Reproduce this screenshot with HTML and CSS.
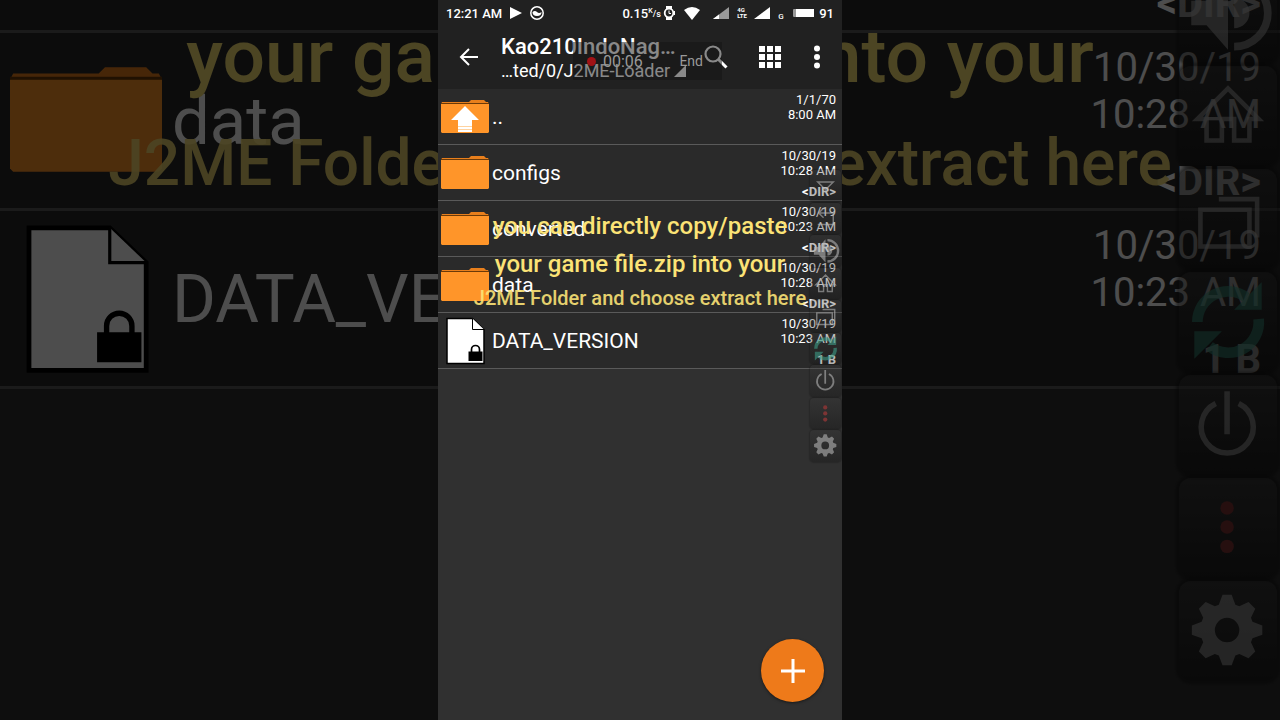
FILE: index.html
```
<!doctype html>
<html lang="en">
    <head>
        <meta charset="utf-8">
        <title>J2ME-Loader files</title>
        <link rel="stylesheet" href="styles.css">
    </head>
    <body>
        <!-- shared icons -->
        <svg class="defs" aria-hidden="true">
            <symbol id="folder" viewBox="0 0 48 48">
                <path fill="#e87f1c" d="M0 11l1-2h27l2-2h13l2 2h2l1 2v3H0z"/>
                <path fill="#ff9529" d="M0 11h48v28l-1 1H1l-1-1z"/>
                <path stroke="#6b3a08" stroke-width="1" d="M0 10.5h48"/>
            </symbol>
            <symbol id="folder-up" viewBox="0 0 48 48">
                <use href="#folder"/>
                <path fill="#fff" d="M24 13l14 14h-7v12H17V27h-7z"/>
                <path stroke="#ffd3a0" d="M17 33.500h14M17 36.500h14"/>
            </symbol>
            <symbol id="locked-file" viewBox="0 0 48 48">
                <path fill="#fff" stroke="#000" stroke-width="1.500" d="M6 1.500h25.500l11.500 11V46.500H6z"/>
                <path fill="#fff" stroke="#000" d="M31.500 1.500v11H43"/>
                <path d="M27.500 34.500h14v9.500h-14z"/>
                <path fill="none" stroke="#000" stroke-width="1.700" d="M30.500 35v-2.500a4 4 0 0 1 8 0V35"/>
            </symbol>
            <symbol id="down" viewBox="0 0 32 32">
                <path fill="none" stroke="currentColor" stroke-width="1.500" d="M8 12h16l-8 8z"/>
            </symbol>
            <symbol id="return" viewBox="0 0 32 32">
                <path fill="none" stroke="currentColor" stroke-width="1.500" d="M14 5l-5 5 5 5M9 10h15v12H8"/>
            </symbol>
            <symbol id="volume" viewBox="0 0 32 32">
                <path fill="currentColor" d="M4 12h5l7-8v24l-7-8H4zM18 11a5 5 0 0 1 0 10z"/>
                <path fill="none" stroke="currentColor" stroke-width="2.500" d="M18 5a11 11 0 0 1 0 22"/>
            </symbol>
            <symbol id="home" viewBox="0 0 32 32">
                <path fill="none" stroke="currentColor" stroke-width="1.500" d="M6 17L16 7l10 10h-3v7h-5v-7h-4v7H9v-7z"/>
            </symbol>
            <symbol id="recents" viewBox="0 0 32 32">
                <path fill="none" stroke="currentColor" stroke-width="1.500" d="M7 13h16v12H7zM13 9.500h12.500V22"/>
            </symbol>
            <symbol id="refresh" viewBox="0 0 32 32">
                <g opacity="0.6">
                    <path fill="none" stroke="#3c9c86" stroke-width="3.500" d="M6 16a10 10 0 0 1 16-8M26 15a10 10 0 0 1-16 9"/>
                    <path fill="#3c9c86" d="M27 3v9H18zM5 28v-9h9z"/>
                </g>
            </symbol>
            <symbol id="power" viewBox="0 0 32 32">
                <path fill="none" stroke="currentColor" stroke-width="1.800" d="M12 9a8.500 8.500 0 1 0 7.500 0M15.700 5v14"/>
            </symbol>
            <symbol id="more-red" viewBox="0 0 32 32">
                <g fill="#7d3434"><circle cx="15.700" cy="9.500" r="2.200"/><circle cx="15.700" cy="15.700" r="2.200"/><circle cx="15.700" cy="22" r="2.200"/></g>
            </symbol>
            <symbol id="gear" viewBox="0 0 32 32">
                <g fill="currentColor" transform="translate(15.700 15.700)">
                    <path fill-rule="evenodd" d="M-2.700-8.300L-1.500-11.500H1.500L2.700-8.300L4-7.800L7-9.200L9.200-7L7.800-4L8.300-2.700L11.500-1.500V1.500L8.300 2.700L7.800 4L9.200 7L7 9.200L4 7.800L2.700 8.300L1.500 11.500H-1.500L-2.700 8.300L-4 7.800L-7 9.200L-9.200 7L-7.800 4L-8.300 2.700L-11.500 1.500V-1.500L-8.300-2.700L-7.800-4L-9.200-7L-7-9.200L-4-7.800zM0-4a4 4 0 1 0 0 8a4 4 0 1 0 0-8z"/>
                </g>
            </symbol>
        </svg>

        <!-- enlarged, dimmed copy behind the phone -->
        <div class="backdrop" aria-hidden="true">
            <div class="files">
                <div class="file"><svg class="file-icon"><use href="#folder"/></svg><span class="name">converted</span><span class="meta">10/30/19<br>10:23 AM<b>&lt;DIR&gt;</b></span></div>
                <div class="file"><svg class="file-icon"><use href="#folder"/></svg><span class="name">data</span><span class="meta">10/30/19<br>10:28 AM<b>&lt;DIR&gt;</b></span></div>
                <div class="file"><svg class="file-icon"><use href="#locked-file"/></svg><span class="name">DATA_VERSION</span><span class="meta">10/30/19<br>10:23 AM<b>1 B</b></span></div>
            </div>
            <div class="caption">
                <p>your game file.zip into your</p>
                <p class="small">J2ME Folder and choose extract here</p>
            </div>
            <div class="tools">
                <span class="tool"><svg><use href="#volume"/></svg></span>
                <span class="tool"><svg><use href="#home"/></svg></span>
                <span class="tool"><svg><use href="#recents"/></svg></span>
                <span class="tool"><svg><use href="#refresh"/></svg></span>
                <span class="tool"><svg><use href="#power"/></svg></span>
                <span class="tool"><svg><use href="#more-red"/></svg></span>
                <span class="tool"><svg><use href="#gear"/></svg></span>
            </div>
        </div>

        <main class="phone">
            <div class="status">
                <span>12:21 AM</span>
                <svg width="12" height="14" viewBox="0 0 12 14"><path fill="#fff" d="M0 1l12 6-12 6z"/></svg>
                <svg width="14" height="14" viewBox="0 0 14 14"><circle cx="7" cy="7" r="6.200" fill="none" stroke="#fff" stroke-width="1.500"/><path fill="#fff" d="M2.500 6q2.500-2 4.500 0t4.500 0q0 4-4.500 4T2.500 6z"/></svg>
                <div class="status-right">
                    <span>0.15</span>
                    <span class="unit"><sup>K</sup>/s</span>
                    <svg width="16" height="14" viewBox="0 0 16 14"><path fill="#fff" d="M3 0h6v3H3zM3 11h6v3H3z"/><circle cx="6" cy="7" r="4.300" fill="#212121" stroke="#fff" stroke-width="1.800"/><path fill="none" stroke="#fff" d="M6 4.500V7.500h2M11.500 5v4"/></svg>
                    <svg width="26" height="14" viewBox="0 0 26 14"><path fill="#fff" d="M1 4q8-6 16 0L9 14z"/></svg>
                    <svg width="20" height="14" viewBox="0 0 20 14"><path fill="#999" d="M0 13L16 1v12z"/><path fill="#fff" d="M0 13l6-4.500V13z"/></svg>
                    <span class="net">4G<br>LTE</span>
                    <svg width="20" height="14" viewBox="0 0 20 14"><path fill="#fff" d="M0 13L16 1v12z"/></svg>
                    <span class="g">G</span>
                    <svg width="23" height="14" viewBox="0 0 23 14"><rect x="1" y="3" width="21" height="8" rx="1" fill="#999"/><path fill="#fff" d="M4 3h18v8H4z"/></svg>
                    <span>91</span>
                </div>
            </div>

            <header class="toolbar">
                <button class="icon-btn" aria-label="Back"><svg width="20" height="20" viewBox="0 0 20 20"><path fill="none" stroke="#fff" stroke-width="2" d="M19 10H2M10 2l-8 8 8 8"/></svg></button>
                <div class="title">
                    <h1>Kao210IndoNag…</h1>
                    <p>…ted/0/J2ME-Loader<svg width="12" height="12" viewBox="0 0 12 12"><path fill="#fff" d="M12 0v12H0z"/></svg></p>
                </div>
                <button class="icon-btn" aria-label="Search"><svg width="24" height="24" viewBox="0 0 24 24"><circle cx="9" cy="9" r="7.500" fill="none" stroke="#fff" stroke-width="2.200"/><path stroke="#fff" stroke-width="3" d="M14.500 14.500l8 8"/></svg></button>
                <button class="icon-btn grid-btn" aria-label="Grid view"><svg width="24" height="24" viewBox="0 0 24 24"><path fill="#fff" d="M1 1h6v6H1zM9 1h6v6H9zM17 1h6v6h-6zM1 9h6v6H1zM9 9h6v6H9zM17 9h6v6h-6zM1 17h6v6H1zM9 17h6v6H9zM17 17h6v6h-6z"/></svg></button>
                <button class="icon-btn" aria-label="More"><svg width="6" height="24" viewBox="0 0 6 24"><g fill="#fff"><circle cx="3" cy="3.500" r="3"/><circle cx="3" cy="12" r="3"/><circle cx="3" cy="20.500" r="3"/></g></svg></button>
                <div class="recorder"><i></i><span>00:06</span><button>End</button></div>
            </header>

            <div class="files">
                <div class="file"><svg class="file-icon"><use href="#folder-up"/></svg><span class="name">..</span><span class="meta">1/1/70<br>8:00 AM</span></div>
                <div class="file"><svg class="file-icon"><use href="#folder"/></svg><span class="name">configs</span><span class="meta">10/30/19<br>10:28 AM<b>&lt;DIR&gt;</b></span></div>
                <div class="file"><svg class="file-icon"><use href="#folder"/></svg><span class="name">converted</span><span class="meta">10/30/19<br>10:23 AM<b>&lt;DIR&gt;</b></span></div>
                <div class="file"><svg class="file-icon"><use href="#folder"/></svg><span class="name">data</span><span class="meta">10/30/19<br>10:28 AM<b>&lt;DIR&gt;</b></span></div>
                <div class="file"><svg class="file-icon"><use href="#locked-file"/></svg><span class="name">DATA_VERSION</span><span class="meta">10/30/19<br>10:23 AM<b>1 B</b></span></div>
            </div>

            <div class="caption">
                <p>you can directly copy/paste</p>
                <p>your game file.zip into your</p>
                <p class="small">J2ME Folder and choose extract here</p>
            </div>

            <div class="tools">
                <button class="tool" aria-label="Notifications"><svg><use href="#down"/></svg></button>
                <button class="tool" aria-label="Return"><svg><use href="#return"/></svg></button>
                <button class="tool" aria-label="Volume"><svg><use href="#volume"/></svg></button>
                <button class="tool" aria-label="Home"><svg><use href="#home"/></svg></button>
                <button class="tool" aria-label="Recent apps"><svg><use href="#recents"/></svg></button>
                <button class="tool" aria-label="Refresh"><svg><use href="#refresh"/></svg></button>
                <button class="tool" aria-label="Power"><svg><use href="#power"/></svg></button>
                <button class="tool" aria-label="More tools"><svg><use href="#more-red"/></svg></button>
                <button class="tool" aria-label="Settings"><svg><use href="#gear"/></svg></button>
            </div>

            <button class="add" aria-label="Add"><svg width="24" height="24" viewBox="0 0 24 24"><path stroke="#fff" stroke-width="3" d="M12 0v24M0 12h24"/></svg></button>
        </main>
    </body>
</html>
```
FILE: styles.css
```
* {
    box-sizing: border-box;
}
body {
    margin: 0;
    min-height: 100vh;
    position: relative;
    overflow: hidden;
    background: #000;
    color: #fff;
    font-family: Roboto, sans-serif;
}
h1, p {
    margin: 0;
}
button {
    padding: 0;
    border: 0;
    background: none;
    color: inherit;
    font: inherit;
}
svg {
    display: block;
    flex: none;
}
.defs {
    position: absolute;
    width: 0;
    height: 0;
}

/* phone */
.phone {
    position: relative;
    width: 100%;
    max-width: 404px;
    min-height: 100vh;
    margin: 0 auto;
    background: #303030;
}
.status {
    display: flex;
    align-items: center;
    gap: 8px;
    height: 26px;
    padding: 0 8px;
    background: #212121;
    font-size: 13px;
    font-weight: 500;
}
.status-right {
    display: flex;
    align-items: center;
    gap: 4px;
    margin-left: auto;
}
.unit {
    width: 11px;
    margin-left: -4px;
    font-size: 9px;
    white-space: nowrap;
}
.unit sup {
    font-size: 7px;
}
.net {
    width: 13px;
    font-size: 6px;
    line-height: 6px;
    font-weight: 700;
}
.g {
    width: 10px;
    padding-top: 6px;
    font-size: 8px;
}
.toolbar {
    position: relative;
    display: flex;
    align-items: center;
    height: 63px;
    padding: 0 10px 2px;
    background: #212121;
}
.icon-btn {
    display: flex;
    justify-content: center;
    flex: none;
    width: 30px;
}
.icon-btn:first-child {
    width: 42px;
}
.grid-btn {
    margin: 0 17px 0 24px;
}
.title {
    flex: 1;
    padding: 4px 0 0 11px;
    white-space: nowrap;
}
.title h1 {
    font-size: 22px;
    line-height: 24px;
    font-weight: 500;
}
.title p {
    display: flex;
    align-items: center;
    gap: 4px;
    font-size: 18px;
    line-height: 24px;
}
.recorder {
    position: absolute;
    left: 135px;
    top: 16px;
    display: flex;
    align-items: center;
    width: 149px;
    height: 38px;
    padding: 0 19px 0 14px;
    background: rgba(20, 20, 20, 0.5);
    color: #999;
    font-size: 16px;
}
.recorder i {
    width: 9px;
    height: 9px;
    margin-right: 7px;
    border-radius: 50%;
    background: #a01216;
}
.recorder button {
    margin-left: auto;
    font-size: 14px;
}

/* file list */
.file {
    display: flex;
    align-items: center;
    gap: 3px;
    height: 56px;
    padding: 0 6px 0 3px;
    border-bottom: 1px solid #5a5a5a;
    background: #2a2a2a;
}
.file-icon {
    width: 48px;
    height: 48px;
}
.name {
    flex: 1;
    font-size: 21px;
}
.meta {
    display: flow-root;
    align-self: stretch;
    padding-top: 3px;
    font-size: 13px;
    line-height: 15px;
    text-align: right;
}
.meta b {
    display: block;
    margin-top: 6px;
}

/* yellow notes over the list */
.caption {
    position: absolute;
    top: 207px;
    left: 0;
    right: 0;
    color: #fbe376;
    font-size: 24px;
    line-height: 38px;
    font-weight: 500;
    text-align: center;
    white-space: nowrap;
}
.caption .small {
    font-size: 20px;
    line-height: 30px;
    opacity: 0.9;
}

/* floating tool strip */
.tools {
    position: absolute;
    top: 170px;
    right: 1px;
    display: grid;
    grid-auto-rows: minmax(0, 1fr);
    gap: 1px;
    width: 31px;
    height: 292px;
}
.tool {
    border-radius: 4px;
    background: linear-gradient(rgba(60, 60, 60, 0.3), rgba(15, 15, 15, 0.3));
    box-shadow: 0 0 1px 1px rgba(20, 20, 20, 0.3);
    color: rgba(180, 180, 180, 0.6);
}
.tool svg {
    width: 100%;
    height: 100%;
}
.add {
    position: absolute;
    right: 18px;
    bottom: 18px;
    display: grid;
    place-items: center;
    width: 63px;
    height: 63px;
    border-radius: 50%;
    background: #ee7a1a;
    box-shadow: 0 1px 3px rgba(0, 0, 0, 0.5);
}

/* backdrop: same parts, about three times larger */
.backdrop {
    position: absolute;
    inset: 0;
    overflow: hidden;
    background: #303030;
    opacity: 0.3;
}
.backdrop .files {
    margin-top: -145px;
}
.backdrop .file {
    gap: 10px;
    height: 178px;
    padding: 0 19px 0 10px;
    border-bottom-width: 3px;
}
.backdrop .file-icon {
    width: 152px;
    height: 152px;
}
.backdrop .name {
    font-size: 67px;
}
.backdrop .meta {
    padding-top: 11px;
    font-size: 40px;
    line-height: 47px;
}
.backdrop .meta b {
    margin-top: 20px;
}
.backdrop .caption {
    top: -4px;
    font-size: 75px;
    line-height: 120px;
}
.backdrop .caption .small {
    font-size: 64px;
    line-height: 96px;
}
.backdrop .tools {
    top: -37px;
    right: 3px;
    gap: 3px;
    width: 98px;
    height: 718px;
}
.backdrop .tool {
    border-radius: 12px;
    background: linear-gradient(rgba(60, 60, 60, 0.5), rgba(15, 15, 15, 0.5));
    box-shadow: 0 0 3px 3px rgba(20, 20, 20, 0.5);
}
```
